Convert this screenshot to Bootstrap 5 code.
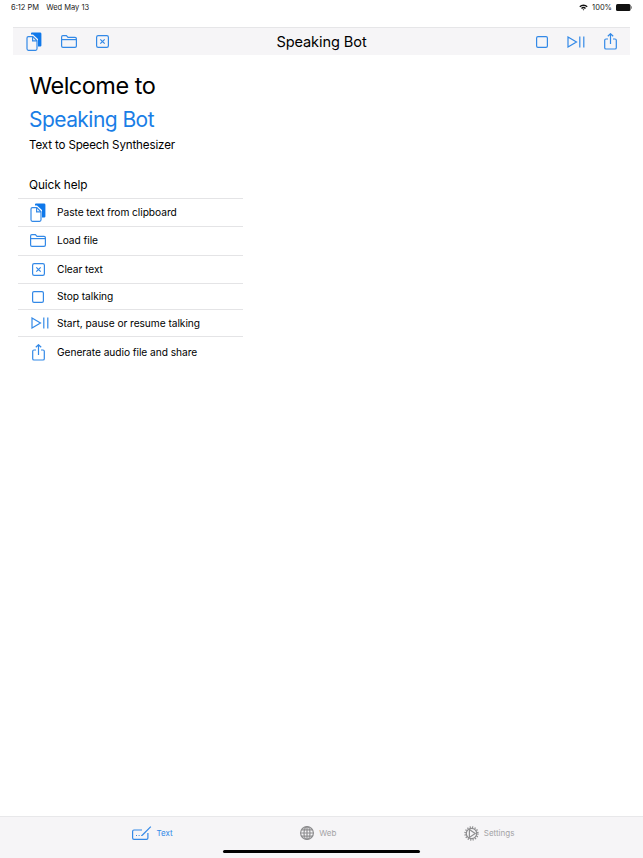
<!DOCTYPE html>
<html lang="en">
<head>
    <meta charset="UTF-8">
    <meta name="viewport" content="width=device-width, initial-scale=1.0">
    <link href="https://cdn.jsdelivr.net/npm/bootstrap@5.3.0/dist/css/bootstrap.min.css" rel="stylesheet">
    <title>Speaking Bot</title>
    <style>
        html, body { height: 100%; }
        body { font-family: Inter, "Liberation Sans", sans-serif; color: #000; background: #fff; overflow: hidden; }
        .app-page { height: 858px; }
        .status-bar { height: 27px; padding: 2px 11px 0 11px; font-size: 7.5px; color: #222; }
        .status-bar .date-text { margin-left: 7px; }
        .tool-bar { height: 28px; margin: 0 13px; background: #f6f5f7; border-top: 1px solid #e6e6e8; }
        .tool-side { width: 130px; }
        .tool-left { padding-left: 13px; gap: 19px; }
        .tool-right { padding-right: 13px; gap: 19px; }
        .tool-title { font-size: 14.6px; padding-top: 2px; letter-spacing: -.1px; }
        .intro-block { padding: 13px 0 0 29px; }
        .intro-one { font-size: 23.5px; line-height: 35px; letter-spacing: -.5px; }
        .intro-two { font-size: 21px; line-height: 33px; letter-spacing: -.55px; color: #1a7ee6; }
        .intro-three { font-size: 11.6px; line-height: 18px; letter-spacing: -.15px; }
        .help-title { font-size: 11.8px; line-height: 16px; padding: 23px 0 5px 29px; letter-spacing: -.1px; }
        .help-list { width: 225px; margin-left: 18px; border-top: 1px solid #e4e4e6; }
        .help-row { font-size: 10.2px; border-bottom: 1px solid #e4e4e6; letter-spacing: -.05px; }
        .help-row:last-child { border-bottom: 0; }
        .h-28 { height: 28.33px; }
        .h-26 { height: 26.5px; }
        .h-32 { height: 32px; }
        .help-icon { width: 39px; padding-left: 1px; flex-shrink: 0; }
        .ico { stroke: #3389e7; fill: none; stroke-width: 1.2; flex-shrink: 0; display: block; }
        .ico-fill { fill: #0f78ea; stroke: none; }
        .tab-bar { height: 42px; padding-left: 3px; background: #f6f5f7; border-top: 1px solid #e8e8ea; position: relative; font-size: 8px; color: #a3a3a5; gap: 127.5px; }
        .tab-item { gap: 5px; padding-bottom: 9px; }
        .tab-item.is-on { color: #3389e7; }
        .tab-grey { stroke: #8e8e90; }
        .home-line { position: absolute; left: 223px; bottom: 5px; width: 197px; height: 3px; border-radius: 2px; background: #000; }
    </style>
</head>
<body>

<svg width="0" height="0" class="position-absolute">
    <defs>
        <symbol id="i-paste" viewBox="0 0 16 19">
            <path class="ico-fill" d="M5 1.2 Q5 .4 6 .4 H14 Q15.4 .4 15.4 1.8 V13.5 Q15.4 14.6 14.2 14.6 H12 V7 L7 2.6 H5 Z"/>
            <path d="M1 6 Q1 4.6 2.4 4.6 H6.8 L11 8.8 V16.8 Q11 18.3 9.6 18.3 H2.4 Q1 18.3 1 16.8 Z"/>
            <path d="M6.6 4.8 V8.8 H11"/>
        </symbol>
        <symbol id="i-folder" viewBox="0 0 16 13">
            <path d="M.6 2 Q.6 .7 1.9 .7 H5.4 L7 2.4 H14 Q15.4 2.4 15.4 3.8 V11 Q15.4 12.4 14 12.4 H2 Q.6 12.4 .6 11 Z"/>
            <path d="M.6 4.6 H15.4"/>
        </symbol>
        <symbol id="i-clear" viewBox="0 0 13 13">
            <rect x=".6" y=".6" width="11.8" height="11.8" rx="1.6"/>
            <path d="M4.3 4.3 L8.7 8.7 M8.7 4.3 L4.3 8.7"/>
        </symbol>
        <symbol id="i-stop" viewBox="0 0 12 12">
            <rect x=".6" y=".6" width="10.8" height="10.8" rx="1.4"/>
        </symbol>
        <symbol id="i-play" viewBox="0 0 18 12">
            <path d="M1 1 L9.5 6 L1 11 Z"/>
            <path d="M12.8 .5 V11.5 M16.8 .5 V11.5"/>
        </symbol>
        <symbol id="i-share" viewBox="0 0 13 17">
            <path d="M4 6 H2 Q.7 6 .7 7.3 V14.7 Q.7 16 2 16 H11 Q12.3 16 12.3 14.7 V7.3 Q12.3 6 11 6 H9"/>
            <path d="M6.5 11 V.8 M3.8 3.2 L6.5 .7 L9.2 3.2"/>
        </symbol>
    </defs>
</svg>

<div class="app-page d-flex flex-column">
    <div class="status-bar d-flex justify-content-between align-items-start">
        <div><span>6:12 PM</span><span class="date-text">Wed May 13</span></div>
        <div class="d-flex align-items-center gap-1">
            <svg width="9" height="7" viewBox="0 0 9 7"><path d="M.3 2.3 A6 6 0 0 1 8.7 2.3 L7.7 3.3 A4.6 4.6 0 0 0 1.3 3.3 Z M2 4 A3.6 3.6 0 0 1 7 4 L6 5 A2.2 2.2 0 0 0 3 5 Z M3.6 5.6 A1.3 1.3 0 0 1 5.4 5.6 L4.5 6.6 Z" fill="#111"/></svg>
            <span>100%</span>
            <svg width="16" height="7" viewBox="0 0 16 7"><rect width="14.5" height="7" rx="1.5" fill="#111"/><rect x="15" y="2.3" width="1" height="2.4" fill="#888"/></svg>
        </div>
    </div>

    <div class="tool-bar d-flex align-items-center justify-content-between">
        <div class="tool-side tool-left d-flex align-items-center">
            <svg class="ico" width="16" height="19"><use href="#i-paste"/></svg>
            <svg class="ico" width="16" height="13"><use href="#i-folder"/></svg>
            <svg class="ico" width="13" height="13"><use href="#i-clear"/></svg>
        </div>
        <div class="tool-title">Speaking Bot</div>
        <div class="tool-side tool-right d-flex align-items-center justify-content-end">
            <svg class="ico" width="12" height="12"><use href="#i-stop"/></svg>
            <svg class="ico" width="18" height="12"><use href="#i-play"/></svg>
            <svg class="ico" width="13" height="17"><use href="#i-share"/></svg>
        </div>
    </div>

    <div class="intro-block">
        <div class="intro-one">Welcome to</div>
        <div class="intro-two">Speaking Bot</div>
        <div class="intro-three">Text to Speech Synthesizer</div>
    </div>

    <div class="help-title">Quick help</div>
    <div class="help-list">
        <div class="help-row h-28 d-flex align-items-center">
            <div class="help-icon d-flex justify-content-center"><svg class="ico" width="16" height="19"><use href="#i-paste"/></svg></div>
            <span>Paste text from clipboard</span>
        </div>
        <div class="help-row h-28 d-flex align-items-center">
            <div class="help-icon d-flex justify-content-center"><svg class="ico" width="16" height="13"><use href="#i-folder"/></svg></div>
            <span>Load file</span>
        </div>
        <div class="help-row h-28 d-flex align-items-center">
            <div class="help-icon d-flex justify-content-center"><svg class="ico" width="13" height="13"><use href="#i-clear"/></svg></div>
            <span>Clear text</span>
        </div>
        <div class="help-row h-26 d-flex align-items-center">
            <div class="help-icon d-flex justify-content-center"><svg class="ico" width="12" height="12"><use href="#i-stop"/></svg></div>
            <span>Stop talking</span>
        </div>
        <div class="help-row h-26 d-flex align-items-center">
            <div class="help-icon d-flex justify-content-center"><svg class="ico ms-1" width="18" height="12"><use href="#i-play"/></svg></div>
            <span>Start, pause or resume talking</span>
        </div>
        <div class="help-row h-32 d-flex align-items-center">
            <div class="help-icon d-flex justify-content-center"><svg class="ico" width="13" height="17"><use href="#i-share"/></svg></div>
            <span>Generate audio file and share</span>
        </div>
    </div>

    <div class="tab-bar mt-auto d-flex justify-content-center align-items-center">
        <div class="tab-item is-on d-flex align-items-center">
            <svg class="ico" width="20" height="14" viewBox="0 0 20 14">
                <path d="M10 4 H2 Q.6 4 .6 5.4 V12 Q.6 13.4 2 13.4 H14.5 Q15.9 13.4 15.9 12 V7"/>
                <path d="M10 9.5 L18.8 .6"/>
                <path d="M4 9.5 H5 M6.6 9.5 H7.6 M9.2 9.5 H10"/>
            </svg>
            <span>Text</span>
        </div>
        <div class="tab-item d-flex align-items-center">
            <svg class="ico tab-grey" width="14" height="14" viewBox="0 0 14 14">
                <circle cx="7" cy="7" r="6.4"/>
                <ellipse cx="7" cy="7" rx="3" ry="6.4"/>
                <path d="M7 .6 V13.4 M.6 7 H13.4 M1.5 3.8 H12.5 M1.5 10.2 H12.5"/>
            </svg>
            <span>Web</span>
        </div>
        <div class="tab-item d-flex align-items-center">
            <svg class="ico tab-grey" width="15" height="15" viewBox="0 0 15 15">
                <circle cx="7.5" cy="7.5" r="6.4" stroke-width="1.6" stroke-dasharray="1.2 1.3"/>
                <circle cx="7.5" cy="7.5" r="5.2"/>
                <path d="M5.4 3.6 L11.2 7.5 L5.4 11.4 Z"/>
            </svg>
            <span>Settings</span>
        </div>
        <div class="home-line"></div>
    </div>
</div>

<script src="https://cdn.jsdelivr.net/npm/bootstrap@5.3.0/dist/js/bootstrap.bundle.min.js"></script>
</body>
</html>
